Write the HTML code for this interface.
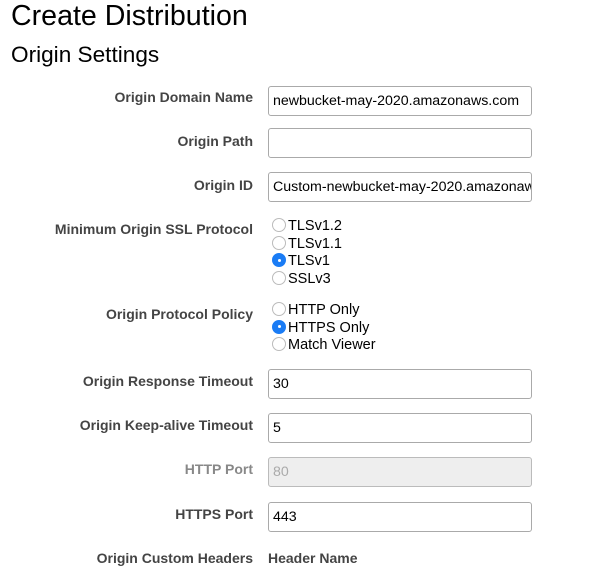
<!DOCTYPE html><html><head><style>
body{margin:0;width:602px;height:570px;overflow:hidden;background:#fff;font-family:"Liberation Sans",Arial,sans-serif;color:#000;position:relative}
.a{position:absolute;white-space:nowrap}
.l{position:absolute;right:349px;font-weight:bold;font-size:14px;color:#444;white-space:nowrap}
.i{position:absolute;left:268px;height:28px;border:1px solid #aaa;border-radius:3px;box-sizing:content-box;font-size:14.2px;line-height:28px;padding-left:4px;width:258px;overflow:hidden;white-space:nowrap}
.r{position:absolute;left:272px;font-size:14.5px;line-height:17.5px;white-space:nowrap}
.r span{display:inline-block;width:14px;height:14px;border:1px solid #bbb;border-radius:50%;vertical-align:-2px;margin-right:2px;box-sizing:border-box}
.r span.on{background:#1a7cf5;border-color:#1a7cf5;position:relative}
.r span.on:after{content:"";position:absolute;left:4.5px;top:4.5px;width:3px;height:3px;background:#fff;border-radius:50%}
</style></head><body>
<div class="a" style="left:11px;top:0px;font-size:28.6px">Create Distribution</div>
<div class="a" style="left:11px;top:42px;font-size:22.6px">Origin Settings</div>
<div class="l" style="top:89px">Origin Domain Name</div>
<div class="i" style="top:86px">newbucket-may-2020.amazonaws.com</div>
<div class="l" style="top:133px">Origin Path</div>
<div class="i" style="top:128px"></div>
<div class="l" style="top:177px">Origin ID</div>
<div class="i" style="top:172px">Custom-newbucket-may-2020.amazonaws.com</div>
<div class="l" style="top:221px">Minimum Origin SSL Protocol</div>
<div class="r" style="top:218px"><span></span>TLSv1.2<br><span></span>TLSv1.1<br><span class="on"></span>TLSv1<br><span></span>SSLv3</div>
<div class="l" style="top:306px">Origin Protocol Policy</div>
<div class="r" style="top:302px"><span></span>HTTP Only<br><span class="on"></span>HTTPS Only<br><span></span>Match Viewer</div>
<div class="l" style="top:373px">Origin Response Timeout</div>
<div class="i" style="top:369px">30</div>
<div class="l" style="top:417px">Origin Keep-alive Timeout</div>
<div class="i" style="top:413px">5</div>
<div class="l" style="top:461px;color:#888">HTTP Port</div>
<div class="i" style="top:457px;background:#eee;color:#aaa;border-color:#bbb">80</div>
<div class="l" style="top:506px">HTTPS Port</div>
<div class="i" style="top:502px">443</div>
<div class="l" style="top:550px">Origin Custom Headers</div>
<div class="a" style="left:268px;top:550px;font-weight:bold;font-size:14px;color:#444">Header Name</div>
</body></html>
